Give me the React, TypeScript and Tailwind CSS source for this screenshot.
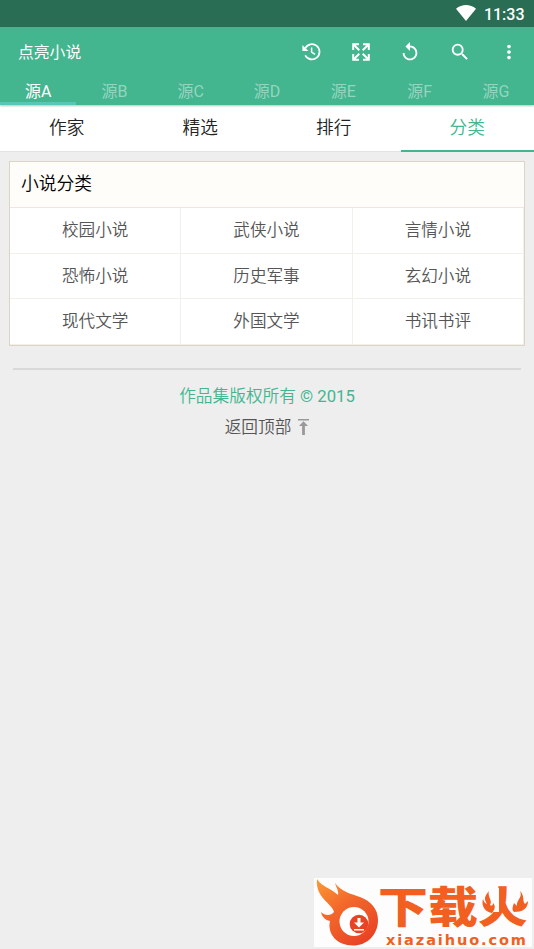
import { useState } from 'react'
import { MdMoreVert, MdReplay, MdSearch } from 'react-icons/md'

const sources = ['源A', '源B', '源C', '源D', '源E', '源F', '源G']

const sections = ['作家', '精选', '排行', '分类']

const categories = [
  '校园小说', '武侠小说', '言情小说',
  '恐怖小说', '历史军事', '玄幻小说',
  '现代文学', '外国文学', '书讯书评',
]

function StatusBar() {
  return (
    <div className="flex h-[27px] items-center justify-end gap-2 bg-[#286d54] pr-[9.5px] text-white">
      <svg width="20" height="16" viewBox="0 0 20 16" fill="currentColor" aria-hidden="true" className="-mt-0.5">
        <path d="M0 3.8C6-1.2 14-1.2 20 3.8L10 16Z" />
      </svg>
      <span className="pt-0.5 text-base leading-6 font-medium">11:33</span>
    </div>
  )
}

function HistoryIcon() {
  return (
    <svg width="20" height="20" viewBox="0 0 20 20" fill="none" stroke="currentColor" strokeWidth="1.8" aria-hidden="true">
      <path d="M4.2 6.2A7.6 7.6 0 1 1 4.2 13.4" />
      <path d="M1.4 3V9H7.4Z" fill="currentColor" stroke="none" />
      <path d="M10.6 5.6V10L14 12.4" strokeWidth="1.5" />
    </svg>
  )
}

function ExpandIcon() {
  return (
    <svg width="18" height="18" viewBox="0 0 18 18" fill="none" stroke="currentColor" strokeWidth="2" aria-hidden="true">
      <path d="M1.2 7V1.2H7M11 1.2H16.8V7M16.8 11V16.8H11M7 16.8H1.2V11" />
      <path d="M1.5 1.5 7.3 7.3M16.5 1.5 10.7 7.3M16.5 16.5 10.7 10.7M1.5 16.5 7.3 10.7" />
    </svg>
  )
}

function AppBar() {
  return (
    <header className="flex h-[50px] items-center justify-between pl-[18px] text-white">
      <h1 className="pt-0.5 text-[15.8px]">点亮小说</h1>
      <div className="flex items-center">
        <button aria-label="history" className="flex w-[49.5px] justify-center"><HistoryIcon /></button>
        <button aria-label="fullscreen" className="flex w-[49.5px] justify-center"><ExpandIcon /></button>
        <button aria-label="reload" className="flex w-[49.5px] justify-center"><MdReplay size={22} /></button>
        <button aria-label="search" className="flex w-[49.5px] justify-center"><MdSearch size={22} /></button>
        <button aria-label="more" className="flex w-[49.5px] justify-center"><MdMoreVert size={22} /></button>
      </div>
    </header>
  )
}

function Watermark() {
  return (
    <div className="absolute top-[878px] left-[314px] flex h-[69px] w-[218px] overflow-hidden bg-[#fdfdfd] text-[#f26021]">
      <svg width="64" height="69" viewBox="0 0 64 69" className="shrink-0" aria-hidden="true">
        <defs>
          <linearGradient id="flame" x1="0" y1="0" x2="0.7" y2="1">
            <stop offset="0" stopColor="#fb9a35" />
            <stop offset="0.45" stopColor="#f3692b" />
            <stop offset="1" stopColor="#e94325" />
          </linearGradient>
        </defs>
        <path
          fill="url(#flame)"
          d="M3 1C8 9 17 10 24 17C25 13 22 9 21 5C27 14 38 16 46 19C57 23 64 31 64 42C64 57 53 67.5 39 67.5C23 67.5 13 56 16 43C11 42 8 39 7 34C11 38 17 38 20 34C18 25 1 20 3 1Z"
        />
        <circle cx="40" cy="43.5" r="14.5" fill="#fff" />
        <circle cx="45" cy="46" r="9.3" fill="#e94325" />
        <path d="M43.5 40H46.5V44.5H50L45 49.5L40 44.5H43.5ZM40 51H50V52.5H40Z" fill="#fff" />
      </svg>
      <div className="relative flex flex-col pt-[9px]">
        <div className="h-11 origin-left scale-x-[1.16] text-[43px] leading-[43px] font-black">下载火</div>
        <svg width="54" height="28" viewBox="0 0 54 28" className="absolute top-2.5 left-[101px]" aria-hidden="true">
          <path d="M0 0H20V24H0ZM31 0H54V20H31Z" fill="#fdfdfd" />
          <path
            fill="currentColor"
            d="M10 3C5 9 5 11 8 16C5 15 5 13 4 11C2 18 6 24 13 25C17 20 16 17 14 15C14 18 12 18 11 17C14 12 8 9 10 3ZM41 3C44 10 37 12 38 18L35 15C33 20 33 22 35 24C43 24 49 21 49 13L46 16C43 13 46 8 41 3Z"
          />
        </svg>
        <div className="mt-[3px] ml-2 font-['DejaVu_Sans'] text-[14.5px] leading-3 font-bold tracking-[1.9px]">xiazaihuo.com</div>
      </div>
    </div>
  )
}

export default function App() {
  const [source, setSource] = useState('源A')
  const [section, setSection] = useState('分类')

  return (
    <div className="relative h-[949px] w-[534px] overflow-hidden bg-[#eeeeee] font-[Roboto,'Noto_Sans_CJK_SC',sans-serif]">
      <StatusBar />
      <div className="relative bg-[#43b58f] shadow-[0_1px_2px_rgba(0,0,0,0.25)]">
        <AppBar />
        <nav className="grid h-7 grid-cols-7">
          {sources.map((name) => (
            <button
              key={name}
              onClick={() => setSource(name)}
              className={`border-b-[3px] pt-[5px] text-base leading-5 ${source === name ? 'border-[#58c7b9] text-white' : 'border-transparent text-[#94d5bf]'}`}
            >
              {name}
            </button>
          ))}
        </nav>
      </div>

      <nav className="grid h-[47px] grid-cols-4 bg-white">
        {sections.map((name) => (
          <button
            key={name}
            onClick={() => setSection(name)}
            className={`text-[17.7px] font-[350] ${section === name ? 'border-b-2 border-[#43b58f] pt-px text-[#43b58f]' : 'border-b border-[#e2e2e2] text-[#222222]'}`}
          >
            {name}
          </button>
        ))}
      </nav>

      <section className="mx-[9px] mt-[9px] border border-[#ddd5c3] bg-white">
        <h2 className="h-[46px] border-b border-[#eee6df] bg-[#fffdf9] pl-[11px] text-[17.8px] leading-[44px] font-[350] text-black">小说分类</h2>
        <ul className="grid grid-cols-3">
          {categories.map((name) => (
            <li
              key={name}
              className="h-[45.67px] border-r border-b border-[#f2f0ea] text-center text-[16.6px] leading-[45px] font-[350] text-[#555555]"
            >
              {name}
            </li>
          ))}
        </ul>
      </section>

      <footer className="mx-[13px] mt-[22px] border-t-2 border-[#d9d9d9] pt-[11px] text-center text-[16.7px] leading-[31px] font-[350]">
        <p className="text-[#43b58f]">作品集版权所有 <span className="font-normal">© 2015</span></p>
        <a href="#" className="flex items-center justify-center gap-[7px] text-[#555555]">
          返回顶部
          <svg width="11" height="16" viewBox="0 0 11 16" fill="#999999" aria-hidden="true">
            <path d="M0 0H11V1.4H0ZM5.5 2.2L10 7H6.9V16H4.1V7H1Z" />
          </svg>
        </a>
      </footer>

      <Watermark />
    </div>
  )
}
